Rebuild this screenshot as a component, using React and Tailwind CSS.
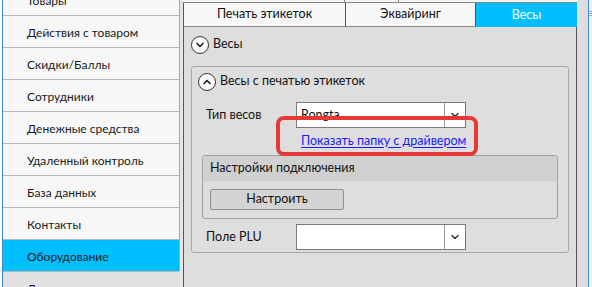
import { ChevronDown, ChevronUp } from 'lucide-react';

const MENU = [
  'Товары',
  'Действия с товаром',
  'Скидки/Баллы',
  'Сотрудники',
  'Денежные средства',
  'Удаленный контроль',
  'База данных',
  'Контакты',
  'Оборудование',
  'Дополнительно',
];

function CircleToggle({ up }) {
  return (
    <span className="w-[18px] h-[18px] rounded-full border border-[#333] bg-white flex items-center justify-center shrink-0">
      {up ? (
        <ChevronUp className="w-3 h-3 text-[#222]" strokeWidth={3.5} />
      ) : (
        <ChevronDown className="w-3 h-3 text-[#222]" strokeWidth={3.5} />
      )}
    </span>
  );
}

function Combo({ value }) {
  return (
    <div className="w-[170px] h-[26px] bg-white border border-[#7a7a7a] flex">
      <div className="flex-1 px-1 leading-[24px] text-[12.5px] text-[#111] overflow-hidden">{value}</div>
      <div className="w-[21px] border-l border-[#9a9a9a] flex items-center justify-center">
        <ChevronDown className="w-3 h-3 text-[#222]" strokeWidth={2.5} />
      </div>
    </div>
  );
}

export default function App() {
  return (
    <div
      className="w-[592px] h-[287px] bg-[#e1e1e1] flex overflow-hidden relative"
      style={{ fontFamily: 'Lato, "Noto Sans", sans-serif' }}
    >
      {/* left edge strip */}
      <div className="w-[3px] h-full bg-white border-r border-[#3d8fd9] shrink-0" />

      {/* sidebar */}
      <div className="w-[177px] h-full bg-[#f7f7f7] border-r border-[#a5a5a5] shrink-0 flex flex-col -mt-[16px]">
        {MENU.map((item) => (
          <div
            key={item}
            className={`h-[32px] shrink-0 border-b border-[#b4b4b4] pl-[24px] pt-[3px] flex items-center text-[12px] ${
              item === 'Оборудование' ? 'bg-[#00bfff] text-[#1a1a1a]' : 'text-[#1a1a1a]'
            }`}
          >
            {item}
          </div>
        ))}
      </div>

      <div className="w-[3px] h-full bg-[#e6e6e6] shrink-0" />

      {/* main panel */}
      <div className="w-[394px] h-full shrink-0 flex flex-col">
        <div className="h-[3px] flex border-b border-[#888] bg-[#f5f5f5] shrink-0">
          <div className="w-[162px] border-r border-[#888]" />
          <div className="w-[54px] border-r border-[#888]" />
          <div className="flex-1" />
        </div>
        <div className="h-[24px] flex bg-[#f7f7f7] border-l border-[#555] shrink-0 text-[12.5px]">
          <div className="w-[162px] border-r border-[#555] border-b border-b-[#888] flex items-center justify-center text-[#111]">
            Печать этикеток
          </div>
          <div className="w-[130px] border-r border-[#555] border-b border-b-[#888] flex items-center justify-center text-[#111]">
            Эквайринг
          </div>
          <div className="flex-1 bg-[#00bfff] flex items-center justify-center text-white">Весы</div>
        </div>

        <div className="flex-1 bg-[#dedede] border-l border-r border-[#555] px-[7px] pt-[8px] text-[12.5px]">
          <div className="flex items-center gap-[4px] h-[19px] text-[#111]">
            <CircleToggle />
            <span>Весы</span>
          </div>

          <div className="mt-[12px] border border-[#a8a8a8] rounded-[3px] h-[187px] pl-[6px] pr-[10px] pt-[5px]">
            <div className="flex items-center gap-[4px] h-[19px] text-[#111]">
              <CircleToggle up />
              <span>Весы с печатью этикеток</span>
            </div>

            <div className="flex items-center mt-[11px] h-[26px]">
              <span className="w-[98px] pl-[8px] text-[#111]">Тип весов</span>
              <Combo value="Rongta" />
            </div>

            <div className="h-[26px] flex items-center pl-[103px]">
              <span className="text-[#1a1aff] underline underline-offset-2 decoration-[#1a1aff]">
                Показать папку с драйвером
              </span>
            </div>

            <div className="border border-[#a0a0a0] rounded-[3px] h-[64px] mt-[1px] ml-[4px]">
              <div className="h-[25px] bg-[#d0d0d0] flex items-center pl-[7px] text-[#111] rounded-t-[3px]">
                Настройки подключения
              </div>
              <div className="pl-[7px] pt-[8px]">
                <div className="w-[134px] h-[21px] bg-[#d4d4d4] border border-[#8f8f8f] rounded-[2px] flex items-center justify-center text-[#111]">
                  Настроить
                </div>
              </div>
            </div>

            <div className="flex items-center mt-[5px] h-[26px]">
              <span className="w-[98px] pl-[8px] text-[#111]">Поле PLU</span>
              <Combo value="" />
            </div>
          </div>
        </div>
      </div>

      <div className="w-[11px] h-full bg-[#dedede] shrink-0" />
      <div className="w-[1px] h-full bg-[#3d8fd9] shrink-0" />
      <div className="flex-1 h-full bg-[#f0f0f0] pt-[10px] text-[#888] text-[7px] leading-none">☰</div>

      {/* annotation frame */}
      <div className="absolute left-[276px] top-[116px] w-[202px] h-[40px] border-[4px] border-[#e53935] rounded-[8px]" />
    </div>
  );
}
